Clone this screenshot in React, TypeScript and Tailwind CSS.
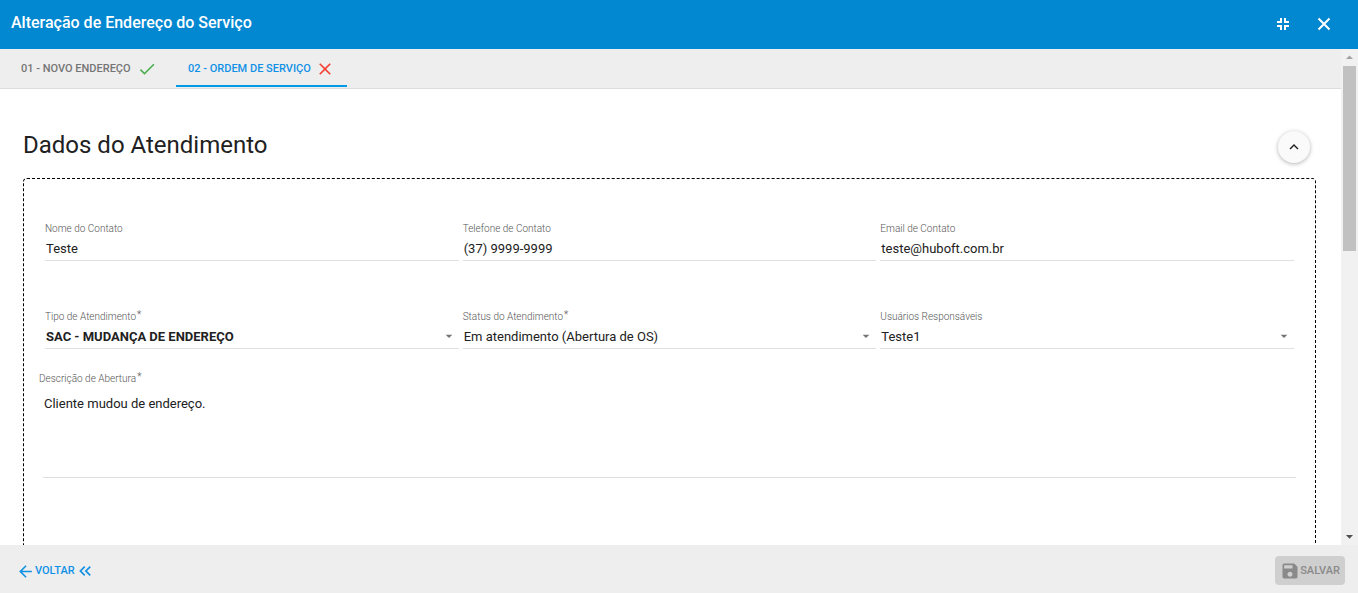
import { useState } from "react";
import type { ReactNode } from "react";
import {
  MdArrowBack,
  MdArrowDropDown,
  MdArrowDropUp,
  MdCheck,
  MdClose,
  MdKeyboardArrowUp,
  MdKeyboardDoubleArrowLeft,
  MdSave,
} from "react-icons/md";

interface FieldProps {
  id: string;
  label: string;
  required?: boolean;
  children: ReactNode;
}

// Heavier strokes than the Material set, for the title bar
function TitleIcon({ d }: { d: string }) {
  return (
    <svg width={20} height={20} viewBox="0 0 20 20" fill="none" stroke="currentColor" strokeWidth={2} aria-hidden="true">
      <path d={d} />
    </svg>
  );
}

function FieldLabel({ id, label, required }: Omit<FieldProps, "children">) {
  return (
    <label htmlFor={id} className="flex h-3 items-center text-[10px] leading-3 font-light text-[#555]">
      {label}
      {required && <span className="ml-px self-start leading-2">*</span>}
    </label>
  );
}

function Field({ id, label, required, children }: FieldProps) {
  return (
    <div className="min-w-0">
      <FieldLabel id={id} label={label} required={required} />
      {children}
    </div>
  );
}

function TextField({ id, label, type = "text", value }: { id: string; label: string; type?: string; value: string }) {
  return (
    <Field id={id} label={label}>
      <input
        id={id}
        type={type}
        defaultValue={value}
        className="block h-[26px] w-full border-b border-[#e0e0e0] bg-transparent px-px pt-0.5 text-[13px] text-[#212121] outline-none"
      />
    </Field>
  );
}

interface SelectFieldProps {
  id: string;
  label: string;
  required?: boolean;
  bold?: boolean;
  options: string[];
}

function SelectField({ id, label, required, bold, options }: SelectFieldProps) {
  return (
    <Field id={id} label={label} required={required}>
      <div className="grid border-b border-[#e0e0e0]">
        <select
          id={id}
          className={`col-start-1 row-start-1 h-[25px] w-full appearance-none bg-transparent px-px pt-0.5 text-[13px] text-[#212121] outline-none ${bold ? "font-bold" : ""}`}
        >
          {options.map(o => (
            <option key={o}>{o}</option>
          ))}
        </select>
        <MdArrowDropDown size={16} className="pointer-events-none col-start-1 row-start-1 mr-0.5 self-center justify-self-end text-[#757575]" />
      </div>
    </Field>
  );
}

const TABS = [
  { title: "01 - Novo Endereço", done: true },
  { title: "02 - Ordem de Serviço", done: false },
];

export default function App() {
  const [activeTab, setActiveTab] = useState(1);
  const [open, setOpen] = useState(true);

  return (
    <div className="flex h-screen flex-col bg-white font-[Roboto,sans-serif] text-[#212121]">
      <header className="flex h-[49px] shrink-0 items-center justify-between bg-[#0288d1] pr-6 pl-[11px] text-white">
        <h1 className="pb-1 text-base font-medium">Alteração de Endereço do Serviço</h1>
        <div className="flex items-center gap-[21px] pb-px">
          <button type="button" aria-label="Restaurar janela">
            <TitleIcon d="M4 8h4V4M12 4v4h4M4 12h4v4M12 16v-4h4" />
          </button>
          <button type="button" aria-label="Fechar">
            <TitleIcon d="M4.5 4.5l11 11M15.500 4.500l-11 11" />
          </button>
        </div>
      </header>

      <div className="flex min-h-0 flex-1">
        <main className="min-w-0 flex-1 overflow-hidden">
          {/* Steps */}
          <div role="tablist" className="flex h-10 border-b border-[#dcdcdc] bg-[#eee] pl-[9px]">
            {TABS.map((tab, i) => (
              <button
                key={tab.title}
                type="button"
                role="tab"
                aria-selected={i === activeTab}
                onClick={() => setActiveTab(i)}
                className={`flex h-[38px] min-w-[167px] items-center border-b-2 px-3 pt-1 text-[11px] font-medium uppercase ${
                  i === activeTab ? "border-[#039be5] text-[#1191e6]" : "border-transparent text-[#757575]"
                }`}
              >
                {tab.title}
                {tab.done ? (
                  <MdCheck size={20} className="ml-1.5 text-[#4caf50]" />
                ) : (
                  <MdClose size={20} className="ml-1 text-[#f44336]" />
                )}
              </button>
            ))}
          </div>

          {/* Attendance data */}
          <section className="pt-10 pr-[25px] pl-[23px]">
            <div className="flex items-center justify-between pr-1.5">
              <h2 className="pb-1 text-2xl">Dados do Atendimento</h2>
              <button
                type="button"
                aria-label="Recolher"
                aria-expanded={open}
                onClick={() => setOpen(!open)}
                className="flex size-8 items-center justify-center rounded-full bg-[#fafafa] shadow-[0_1px_4px_rgba(0,0,0,0.3)]"
              >
                <MdKeyboardArrowUp size={18} />
              </button>
            </div>

            {open && (
              <div className="mt-[13px] h-[520px] rounded border border-dashed border-black pt-11">
                <div className="grid grid-cols-3 gap-x-1 gap-y-[50px] px-[21px]">
                  <TextField id="nome" label="Nome do Contato" value="Teste" />
                  <TextField id="telefone" label="Telefone de Contato" type="tel" value="(37) 9999-9999" />
                  <TextField id="email" label="Email de Contato" type="email" value="teste@huboft.com.br" />
                  <SelectField id="tipo" label="Tipo de Atendimento" required bold options={["SAC - MUDANÇA DE ENDEREÇO"]} />
                  <SelectField id="status" label="Status do Atendimento" required options={["Em atendimento (Abertura de OS)"]} />
                  <SelectField id="usuarios" label="Usuários Responsáveis" options={["Teste1"]} />
                </div>
                <div className="mt-6 pr-[19px] pl-[15px]">
                  <FieldLabel id="descricao" label="Descrição de Abertura" required />
                  <div className="pl-1">
                    <textarea
                      id="descricao"
                      defaultValue="Cliente mudou de endereço."
                      className="block h-[93px] w-full resize-none border-b border-[#e0e0e0] bg-transparent px-px pt-[9px] text-[13px] leading-5 outline-none"
                    />
                  </div>
                </div>
              </div>
            )}
          </section>
        </main>

        {/* Scrollbar */}
        <div aria-hidden="true" className="flex w-[17px] shrink-0 flex-col items-center bg-[#f1f1f1]">
          <MdArrowDropUp size={17} className="text-[#a3a3a3]" />
          <div className="w-full flex-1 px-0.5">
            <div className="h-2/5 bg-[#c1c1c1]" />
          </div>
          <MdArrowDropDown size={17} className="text-[#505050]" />
        </div>
      </div>

      <footer className="flex h-12 shrink-0 items-center justify-between bg-[#eee] pt-0.5 pr-[13px] pl-4 text-[11px]">
        <button type="button" className="flex items-center pt-0.5 font-medium text-[#1191e6] uppercase">
          <MdArrowBack size={19} />
          Voltar
          <MdKeyboardDoubleArrowLeft size={20} />
        </button>
        <button type="button" disabled className="flex h-[29px] items-center rounded-sm bg-[#cfcfcf] px-[5px] pt-0.5 font-medium text-[#8a8a8a] uppercase">
          <MdSave size={20} />
          Salvar
        </button>
      </footer>
    </div>
  );
}
